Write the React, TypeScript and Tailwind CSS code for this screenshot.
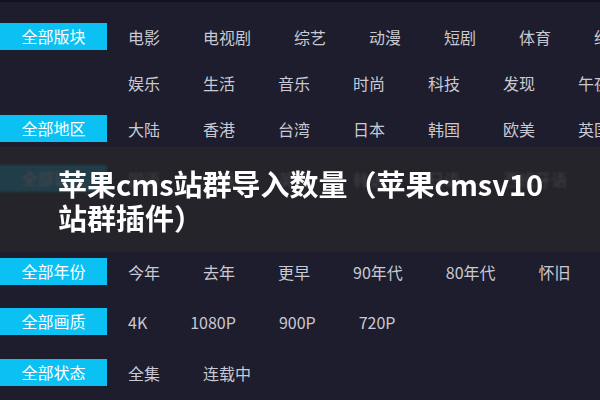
const groups: { label: string; lines: string[][]; mb: string }[] = [
  {
    label: "全部版块",
    lines: [
      ["电影", "电视剧", "综艺", "动漫", "短剧", "体育", "纪录片"],
      ["娱乐", "生活", "音乐", "时尚", "科技", "发现", "午夜"],
    ],
    mb: "mb-[19px]",
  },
  {
    label: "全部地区",
    lines: [["大陆", "香港", "台湾", "日本", "韩国", "欧美", "英国", "其他"]],
    mb: "mb-[23px]",
  },
  {
    label: "全部语言",
    lines: [["国语", "粤语", "英语", "韩语", "日语", "西班牙语", "其他"]],
    mb: "mb-[66px]",
  },
  {
    label: "全部年份",
    lines: [["今年", "去年", "更早", "90年代", "80年代", "怀旧"]],
    mb: "mb-[23px]",
  },
  {
    label: "全部画质",
    lines: [["4K", "1080P", "900P", "720P"]],
    mb: "mb-[24px]",
  },
  {
    label: "全部状态",
    lines: [["全集", "连载中"]],
    mb: "",
  },
];

export default function App() {
  return (
    <div
      className="relative w-[600px] h-[400px] overflow-hidden bg-[#1d1d2d] border-t-2 border-[#13131d]"
      style={{ fontFamily: '"Noto Sans CJK SC", "Noto Sans", sans-serif' }}
    >
      {/* filter rows */}
      <div className="pt-[21px]">
        {groups.map((g) => (
          <div key={g.label} className={`flex flex-col gap-[19px] ${g.mb}`}>
            {g.lines.map((line, i) => (
              <div key={i} className="flex items-center h-[27px] whitespace-nowrap">
                {i === 0 ? (
                  <div className="w-[107px] h-[27px] shrink-0 bg-[#0bc1f4] text-white text-[16px] leading-[27px] text-center">
                    {g.label}
                  </div>
                ) : (
                  <div className="w-[107px] shrink-0" />
                )}
                <div className="ml-[21px] flex gap-[43px] text-[16px] text-[#c9c9d3]">
                  {line.map((item) => (
                    <span key={item}>{item}</span>
                  ))}
                </div>
              </div>
            ))}
          </div>
        ))}
      </div>

      {/* title band over the list */}
      <div className="absolute left-0 right-0 top-[145px] h-[105px] bg-[#26262a]/85 backdrop-blur-[1px] flex items-center pl-[58px]">
        <h1 className="text-white font-bold text-[29px] leading-[34px] tracking-normal">
          苹果cms站群导入数量（苹果cmsv10
          <br />
          站群插件）
        </h1>
      </div>
    </div>
  );
}
